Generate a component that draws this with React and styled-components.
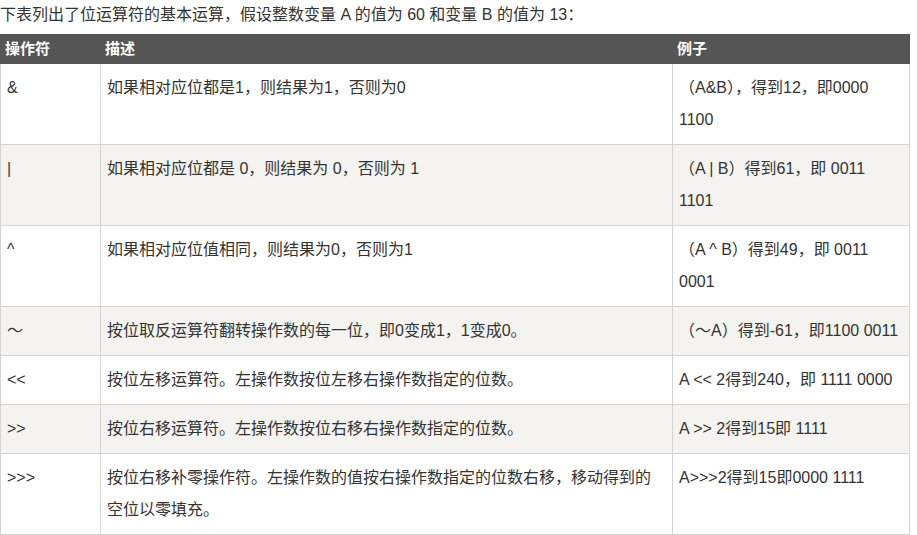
import React from "react";
import styled, { createGlobalStyle } from "styled-components";

const Global = createGlobalStyle`
  html, body { margin: 0; padding: 0; background: #fff; }
  body {
    font-family: "Liberation Sans", "Noto Sans CJK SC", sans-serif;
    color: #333;
    font-size: 16px;
  }
`;

const Page = styled.div`
  width: 917px;
`;

const Intro = styled.p`
  margin: 0 0 4px;
  line-height: 30px;
  font-size: 16px;
  color: #333;
`;

const Table = styled.table`
  width: 909px;
  border-collapse: collapse;
  table-layout: fixed;
`;

const HeadCell = styled.th`
  background: #555;
  color: #fff;
  border: 1px solid #555;
  padding: 4px 4px;
  font-size: 15px;
  line-height: 20px;
  font-weight: bold;
  text-align: left;
`;

const Row = styled.tr`
  background: ${(p) => (p.$alt ? "#f4f3f0" : "#fff")};
`;

const Cell = styled.td`
  border: 1px solid #d4d4d4;
  padding: 8px 6px;
  line-height: 32px;
  vertical-align: top;
  color: #333;
  font-size: 16px;
  white-space: ${(p) => (p.$nowrap ? "nowrap" : "normal")};
  word-break: break-word;
`;

const rows = [
  ["&", "如果相对应位都是1，则结果为1，否则为0", "（A&B），得到12，即0000 1100"],
  ["|", "如果相对应位都是 0，则结果为 0，否则为 1", "（A | B）得到61，即 0011 1101"],
  ["^", "如果相对应位值相同，则结果为0，否则为1", "（A ^ B）得到49，即 0011 0001"],
  ["〜", "按位取反运算符翻转操作数的每一位，即0变成1，1变成0。", "（〜A）得到-61，即1100 0011", true],
  ["<<", "按位左移运算符。左操作数按位左移右操作数指定的位数。", "A << 2得到240，即 1111 0000"],
  [">>", "按位右移运算符。左操作数按位右移右操作数指定的位数。", "A >> 2得到15即 1111"],
  [">>>", "按位右移补零操作符。左操作数的值按右操作数指定的位数右移，移动得到的空位以零填充。", "A>>>2得到15即0000 1111"],
];

export default function App() {
  return (
    <Page>
      <Global />
      <Intro>下表列出了位运算符的基本运算，假设整数变量 A 的值为 60 和变量 B 的值为 13：</Intro>
      <Table>
        <colgroup>
          <col style={{ width: 100 }} />
          <col style={{ width: 572 }} />
          <col style={{ width: 237 }} />
        </colgroup>
        <thead>
          <tr>
            <HeadCell>操作符</HeadCell>
            <HeadCell>描述</HeadCell>
            <HeadCell>例子</HeadCell>
          </tr>
        </thead>
        <tbody>
          {rows.map(([op, desc, ex, nowrap], i) => (
            <Row key={i} $alt={i % 2 === 1}>
              <Cell>{op}</Cell>
              <Cell>{desc}</Cell>
              <Cell $nowrap={!!nowrap}>{ex}</Cell>
            </Row>
          ))}
        </tbody>
      </Table>
    </Page>
  );
}
